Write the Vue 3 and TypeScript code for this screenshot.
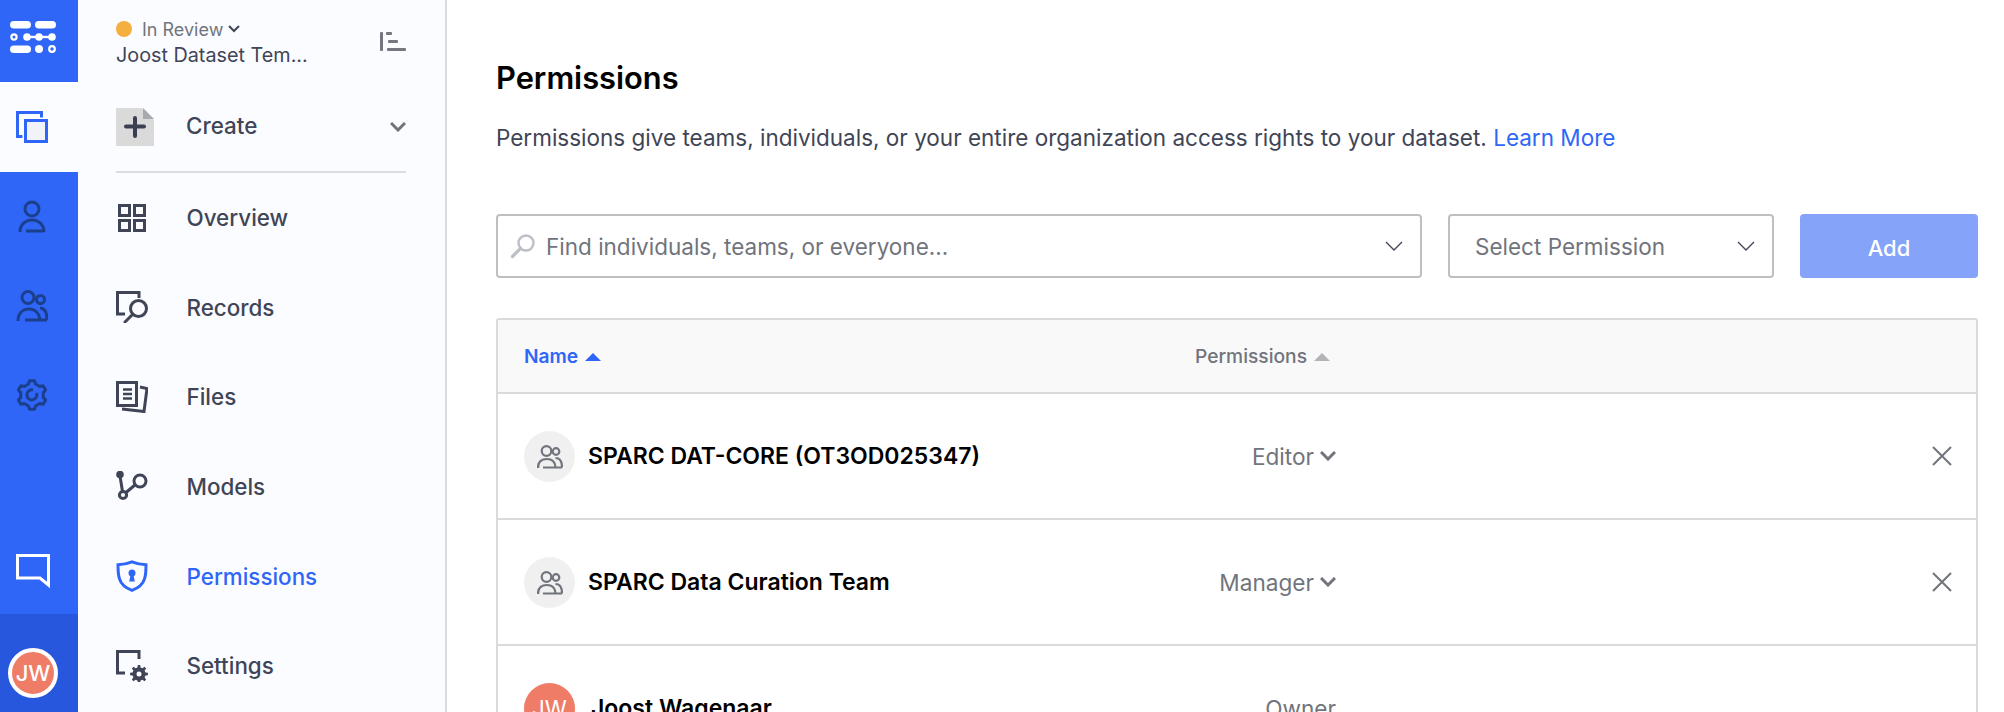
<script setup lang="ts">
/**
 * Dataset permissions page
 * Icon rail, dataset nav and the permissions table
 */

interface NavItem {
  label: string;
  icon: string;
  active?: boolean;
}

interface Member {
  name: string;
  role: string;
  initials?: string;
  removable: boolean;
}

const navItems: NavItem[] = [
  { label: "Overview", icon: "overview" },
  { label: "Records", icon: "records" },
  { label: "Files", icon: "files" },
  { label: "Models", icon: "models" },
  { label: "Permissions", icon: "permissions", active: true },
  { label: "Settings", icon: "settings" }
];

const members: Member[] = [
  { name: "SPARC DAT-CORE (OT3OD025347)", role: "Editor", removable: true },
  { name: "SPARC Data Curation Team", role: "Manager", removable: true },
  { name: "Joost Wagenaar", role: "Owner", initials: "JW", removable: false }
];

// cog outline, used by the rail and the settings nav icon
const gearPath = (cx: number, cy: number, outer: number, inner: number, teeth: number) => {
  const pts: string[] = [];
  const step = (Math.PI * 2) / teeth;
  for (let i = 0; i < teeth; i++) {
    const a = i * step - Math.PI / 2;
    const corners: [number, number][] = [
      [inner, a - step * 0.3],
      [outer, a - step * 0.17],
      [outer, a + step * 0.17],
      [inner, a + step * 0.3]
    ];
    for (const [r, t] of corners) {
      pts.push(`${(cx + r * Math.cos(t)).toFixed(2)} ${(cy + r * Math.sin(t)).toFixed(2)}`);
    }
  }
  return `M${pts.join("L")}Z`;
};

const railGear = gearPath(16, 16, 14.5, 11.5, 6);
const navGear = gearPath(23, 24, 9, 6.6, 8);
</script>

<template>
  <div class="page">
    <aside class="rail">
      <div class="rail-logo">
        <svg width="46" height="32" viewBox="0 0 46 32" fill="#fff">
          <rect x="0" y="0" width="21" height="7.5" rx="3.75" />
          <rect x="25" y="0" width="21" height="7.5" rx="3.75" />
          <circle cx="4" cy="16" r="2.6" fill="none" stroke="#fff" stroke-width="2.2" />
          <circle cx="17" cy="16" r="3.8" />
          <circle cx="29" cy="16" r="3.8" />
          <circle cx="42" cy="16" r="3.8" />
          <rect x="17" y="14.8" width="25" height="2.4" />
          <rect x="0" y="24.5" width="21" height="7.5" rx="3.75" />
          <circle cx="29" cy="28" r="4" />
          <circle cx="42" cy="28" r="2.8" fill="none" stroke="#fff" stroke-width="2.2" />
        </svg>
      </div>
      <div class="rail-item rail-active">
        <svg width="32" height="32" viewBox="0 0 32 32" fill="none" stroke="#2f66f8" stroke-width="3">
          <path d="M6.5 25.5H1.5V1.5H25.5V6.5" />
          <rect x="9.5" y="9.5" width="21" height="21" fill="#f1f3f9" />
        </svg>
      </div>
      <div class="rail-item">
        <svg width="32" height="34" viewBox="0 0 32 34" fill="none" stroke="#1c3f8c" stroke-width="3">
          <circle cx="16" cy="9" r="7" />
          <path d="M4 32c0-7 5-12 12-12s12 5 12 12M10 31H28" />
        </svg>
      </div>
      <div class="rail-item rail-item-tight">
        <svg width="32" height="32" viewBox="0 0 32 32" fill="none" stroke="#1c3f8c" stroke-width="3">
          <circle cx="12" cy="7.500" r="6" />
          <circle cx="24.500" cy="9.500" r="4" />
          <path d="M2 31c0-7 4-12 11-12 6 0 10 4 11 10M9 30H31M24 18c4.500 0 7 4 7 12" />
        </svg>
      </div>
      <div class="rail-item">
        <svg width="32" height="32" viewBox="0 0 32 32" fill="none" stroke="#1c3f8c" stroke-width="3" stroke-linejoin="round">
          <path :d="railGear" />
          <path d="M20.500 14a5 5 0 1 1-3.500-3" />
        </svg>
      </div>
      <div class="rail-spacer"></div>
      <div class="rail-chat">
        <svg width="34" height="35" viewBox="0 0 34 35" fill="none" stroke="#fff" stroke-width="3">
          <path d="M1.5 1.5H32.5V31L24 24H1.5Z" />
        </svg>
      </div>
      <div class="rail-user">
        <span class="rail-avatar">JW</span>
      </div>
    </aside>

    <nav class="sidebar">
      <div class="dataset">
        <div class="dataset-info">
          <div class="dataset-status">
            <span class="status-dot"></span>
            <span>In Review</span>
            <svg width="12" height="8" viewBox="0 0 12 8" fill="none" stroke="#3f4556" stroke-width="2">
              <path d="M1 1l5 5 5-5" />
            </svg>
          </div>
          <div class="dataset-name">Joost Dataset Tem...</div>
        </div>
        <svg width="26" height="20" viewBox="0 0 26 20" fill="#74777f">
          <rect x="0" y="0" width="3" height="19" rx="1" />
          <rect x="6" y="0" width="6" height="3" rx="1" />
          <rect x="8" y="8" width="10" height="3" rx="1" />
          <rect x="7" y="16" width="19" height="3" rx="1" />
        </svg>
      </div>

      <div class="create">
        <svg class="create-icon" width="38" height="38" viewBox="0 0 38 38">
          <path d="M0 0H26L38 12V38H0Z" fill="#dadada" />
          <path d="M27 0L38 11H27Z" fill="#a9a9af" />
          <path d="M10 18.5H28M19 10V28" fill="none" stroke="#3a4052" stroke-width="4" stroke-linecap="round" />
        </svg>
        <span class="create-label">Create</span>
        <svg width="16" height="10" viewBox="0 0 16 10" fill="none" stroke="#71747c" stroke-width="3">
          <path d="M1 1l7 7 7-7" />
        </svg>
      </div>

      <ul class="nav-list">
        <li v-for="item in navItems" :key="item.label" class="nav-item" :class="{ active: item.active }">
          <span class="nav-icon">
            <svg v-if="item.icon === 'overview'" width="32" height="32" viewBox="0 0 32 32" fill="none" stroke="#3f4556" stroke-width="3">
              <rect x="3.5" y="3.5" width="10" height="10" />
              <rect x="18.5" y="3.5" width="10" height="10" />
              <rect x="3.5" y="18.5" width="10" height="10" />
              <rect x="18.5" y="18.5" width="10" height="10" />
            </svg>
            <svg v-else-if="item.icon === 'records'" width="32" height="32" viewBox="0 0 32 32" fill="none" stroke="#3f4556" stroke-width="3">
              <path d="M9 23H1.5V1.5H23V7" />
              <circle cx="22.5" cy="17.5" r="8" />
              <path d="M16 24l-7 7" stroke-linecap="round" />
            </svg>
            <svg v-else-if="item.icon === 'files'" width="32" height="32" viewBox="0 0 32 32" fill="none" stroke="#3f4556" stroke-width="3">
              <rect x="1.5" y="1.5" width="19" height="23" />
              <path d="M24 6l7 1.500-3 23-22-2.500" />
              <path d="M7 8.500H16M7 13H16M7 17.500H16" stroke-width="2.600" />
            </svg>
            <svg v-else-if="item.icon === 'models'" width="32" height="32" viewBox="0 0 32 32" fill="none" stroke="#3f4556" stroke-width="3">
              <circle cx="4" cy="3.500" r="3.800" fill="#3f4556" stroke="none" />
              <path d="M4 5L6.500 20.500" />
              <circle cx="7" cy="24" r="3.600" />
              <circle cx="24" cy="10" r="6" />
              <path d="M10 21.500l9.500-8" />
            </svg>
            <svg v-else-if="item.icon === 'permissions'" width="32" height="32" viewBox="0 0 32 32" fill="none" stroke="#2f66f8" stroke-width="3">
              <path d="M16 1.800c5 2 9 2.700 14 3 0 5 0 10-1.500 14C27 24 22 28 16 30.300 10 28 5 24 3.500 18.800 2 14.800 2 9.800 2 4.800c5-.3 9-1 14-3Z" />
              <circle cx="16" cy="13" r="3.500" fill="#2f66f8" stroke="none" />
              <path d="M14.800 14H17.200L18.800 21.500H13.200Z" fill="#2f66f8" stroke="none" />
            </svg>
            <svg v-else width="32" height="32" viewBox="0 0 32 32" fill="none" stroke="#3f4556" stroke-width="3">
              <path d="M9 23H1.500V1.500H23V9" />
              <path :d="navGear" fill="#3f4556" stroke="none" />
              <circle cx="23" cy="24" r="2.500" fill="#fbfcff" stroke="none" />
            </svg>
          </span>
          <span class="nav-label">{{ item.label }}</span>
        </li>
      </ul>
    </nav>

    <main class="content">
      <h1 class="title">Permissions</h1>
      <p class="intro">
        Permissions give teams, individuals, or your entire organization access rights to your dataset.
        <a class="learn-more">Learn More</a>
      </p>

      <div class="form">
        <div class="field field-search">
          <svg width="26" height="26" viewBox="0 0 26 26" fill="none" stroke="#bcbfc6" stroke-width="2.400">
            <circle cx="16" cy="10" r="7.500" />
            <path d="M10.500 15.500L2.500 23.500" stroke-width="3.200" stroke-linecap="round" />
          </svg>
          <span class="placeholder">Find individuals, teams, or everyone...</span>
          <svg width="18" height="10" viewBox="0 0 18 10" fill="none" stroke="#3f4556" stroke-width="1.300">
            <path d="M1 1l8 8 8-8" />
          </svg>
        </div>
        <div class="field field-select">
          <span class="placeholder">Select Permission</span>
          <svg width="18" height="10" viewBox="0 0 18 10" fill="none" stroke="#3f4556" stroke-width="1.300">
            <path d="M1 1l8 8 8-8" />
          </svg>
        </div>
        <button class="add-btn" type="button">Add</button>
      </div>

      <div class="table">
        <div class="table-head">
          <span class="sort sort-active">Name <i class="caret"></i></span>
          <span class="sort">Permissions <i class="caret"></i></span>
        </div>
        <div v-for="member in members" :key="member.name" class="table-row">
          <div class="member">
            <span v-if="member.initials" class="avatar avatar-user">{{ member.initials }}</span>
            <span v-else class="avatar">
              <svg width="26" height="26" viewBox="0 0 26 26" fill="none" stroke="#71747c" stroke-width="2.200">
                <circle cx="9.500" cy="8" r="4.800" />
                <circle cx="19" cy="8.500" r="3.300" />
                <path d="M1 25c0-6 3.500-9 9-9 4.500 0 8 2.500 8.500 8M6 24.500H25M18.500 15c4 0 6.500 3.500 6.500 9.500" />
              </svg>
            </span>
            <span class="member-name">{{ member.name }}</span>
          </div>
          <div class="member-role">
            <span>{{ member.role }}</span>
            <svg v-if="member.removable" width="16" height="10" viewBox="0 0 16 10" fill="none" stroke="#71747c" stroke-width="3">
              <path d="M1 1l7 7 7-7" />
            </svg>
          </div>
          <svg v-if="member.removable" class="remove" width="20" height="20" viewBox="0 0 20 20" fill="none" stroke="#71747c" stroke-width="2">
            <path d="M1 1l18 18M19 1L1 19" />
          </svg>
        </div>
      </div>
    </main>
  </div>
</template>

<style scoped>
.page {
  display: flex;
  height: 712px;
  overflow: hidden;
  background: #fff;
  font-family: Inter, "Liberation Sans", sans-serif;
  color: #3f4556;
}

.rail {
  width: 78px;
  flex-shrink: 0;
  display: flex;
  flex-direction: column;
  background: #2f66f8;
}

.rail-logo {
  height: 82px;
  display: flex;
  padding: 21px 0 0 10px;
  box-sizing: border-box;
}

.rail-item {
  height: 90px;
  display: flex;
  align-items: center;
  padding-left: 16px;
  box-sizing: border-box;
}

.rail-item-tight {
  height: 88px;
}

.rail-active {
  background: #fbfcff;
}

.rail-spacer {
  flex: 1;
}

.rail-chat {
  height: 60px;
  padding-left: 16px;
  box-sizing: border-box;
}

.rail-user {
  height: 98px;
  background: #2757dc;
  padding: 34px 0 0 8px;
  box-sizing: border-box;
}

.rail-avatar {
  width: 50px;
  height: 50px;
  border: 4px solid #fff;
  border-radius: 50%;
  background: #ef7c67;
  color: #fff;
  font-size: 22px;
  font-weight: 500;
  display: flex;
  align-items: center;
  justify-content: center;
  box-sizing: border-box;
}

.sidebar {
  width: 369px;
  flex-shrink: 0;
  background: #fbfcff;
  border-right: 2px solid #dcdcde;
  padding: 0 39px 0 38px;
  box-sizing: border-box;
}

.dataset {
  height: 82px;
  display: flex;
  justify-content: space-between;
  align-items: flex-start;
  padding-top: 16px;
  box-sizing: border-box;
}

.dataset > svg {
  margin-top: 16px;
}

.dataset-status {
  display: flex;
  align-items: center;
  gap: 5px;
  height: 26px;
  font-size: 18px;
  color: #71747c;
}

.status-dot {
  width: 16px;
  height: 16px;
  margin-right: 5px;
  border-radius: 50%;
  background: #f5af3f;
}

.dataset-name {
  font-size: 19.8px;
  line-height: 26px;
  color: #3f4556;
}

.create {
  height: 89px;
  display: flex;
  align-items: center;
  border-bottom: 2px solid #dcdcde;
  box-sizing: content-box;
}

.create-icon {
  margin-right: 32px;
}

.create-label {
  flex: 1;
  padding-bottom: 2px;
  font-size: 22.4px;
  font-weight: 500;
}

.nav-list {
  list-style: none;
  margin: 0;
  padding: 0;
}

.nav-item {
  height: 89.600px;
  display: flex;
  align-items: center;
  font-size: 22.4px;
  font-weight: 500;
}

.nav-item.active {
  color: #2f66f8;
}

.nav-icon {
  width: 70.500px;
  display: flex;
}

.content {
  flex: 1;
  min-width: 0;
  padding: 0 26px 0 49px;
}

.title {
  margin: 0;
  padding-top: 60px;
  font-size: 30.8px;
  line-height: 36px;
  font-weight: 600;
  color: #000;
}

.intro {
  margin: 27px 0 0;
  font-size: 22.5px;
  line-height: 30px;
  color: #3f4556;
}

.learn-more {
  color: #2f66f8;
}

.form {
  display: flex;
  gap: 26px;
  margin-top: 61px;
}

.field {
  height: 64px;
  border: 2px solid #bfbfbf;
  border-radius: 4px;
  display: flex;
  align-items: center;
  box-sizing: border-box;
  background: #fff;
}

.field-search {
  width: 926px;
  padding: 0 17px 0 12px;
  gap: 10px;
}

.field-select {
  width: 326px;
  padding: 0 17px 0 25px;
}

.placeholder {
  flex: 1;
  font-size: 22.5px;
  color: #71747c;
}

.add-btn {
  flex: 1;
  height: 64px;
  border: 0;
  border-radius: 4px;
  padding-top: 4px;
  background: #84a3f9;
  color: #fff;
  font-family: inherit;
  font-size: 22px;
  font-weight: 500;
}

.table {
  margin-top: 40px;
  border: 2px solid #dadada;
  border-bottom: 0;
  border-radius: 3px 3px 0 0;
}

.table-head {
  height: 72px;
  display: grid;
  grid-template-columns: 671px 1fr;
  align-items: center;
  padding: 0 26px;
  background: #f9f9f9;
}

.sort {
  font-size: 19.2px;
  font-weight: 500;
  color: #71747c;
}

.sort-active {
  font-weight: 600;
  color: #2f66f8;
}

.caret {
  display: inline-block;
  width: 0;
  height: 0;
  margin-left: 2px;
  vertical-align: 2px;
  border-left: 8px solid transparent;
  border-right: 8px solid transparent;
  border-bottom: 8px solid #b4b4b8;
}

.sort-active .caret {
  border-bottom-color: #2f66f8;
}

.table-row {
  height: 126px;
  display: grid;
  grid-template-columns: 671px 141px 1fr;
  align-items: center;
  padding: 0 26px;
  border-top: 2px solid #dadada;
  box-sizing: border-box;
}

.member {
  display: flex;
  align-items: center;
  gap: 13px;
}

.avatar {
  width: 51px;
  height: 51px;
  border-radius: 50%;
  background: #f0f0f1;
  display: flex;
  align-items: center;
  justify-content: center;
}

.avatar-user {
  background: #ef7c67;
  color: #fff;
  font-size: 22.4px;
}

.avatar-user + .member-name {
  margin-left: 3px;
}

.member-name {
  font-size: 23px;
  font-weight: 600;
  color: #000;
}

.member-role {
  display: flex;
  align-items: center;
  justify-content: flex-end;
  gap: 6px;
  font-size: 22.6px;
  color: #71747c;
}

.remove {
  justify-self: end;
  margin-right: -2px;
}
</style>

<style>
html,
body {
  margin: 0;
  overflow: hidden;
}
</style>
